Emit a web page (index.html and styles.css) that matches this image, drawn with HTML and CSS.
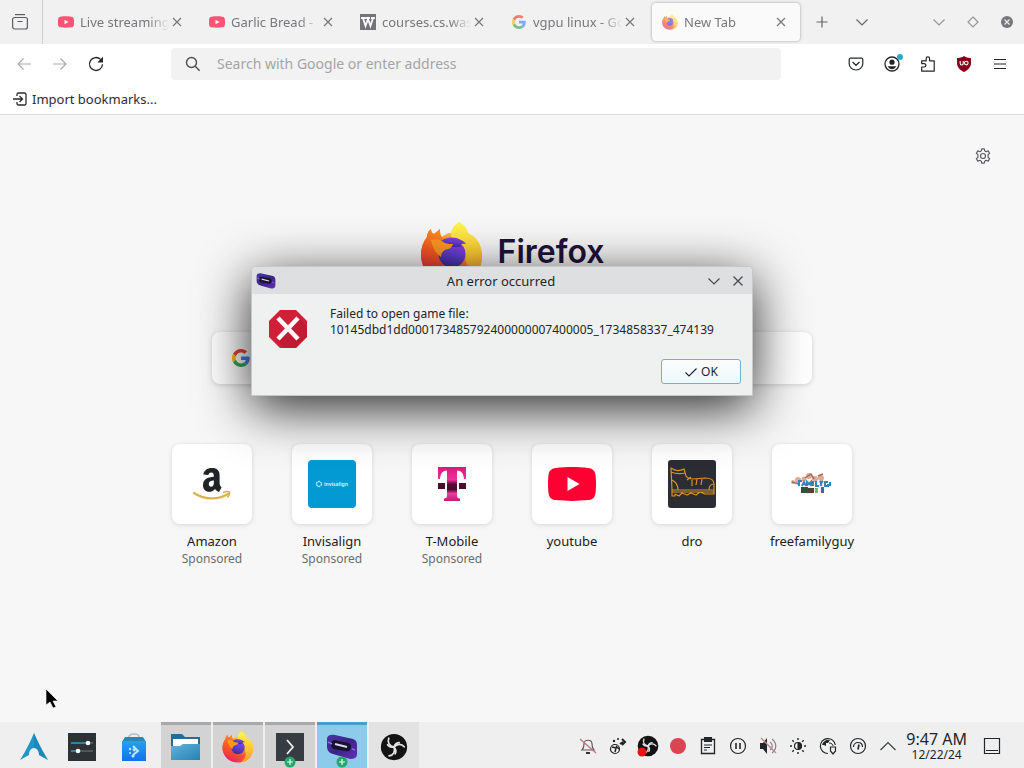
FILE: index.html
```html
<!DOCTYPE html>
<html lang="en">
<head>
<meta charset="utf-8">
<meta name="viewport" content="width=device-width, initial-scale=1">
<title>New Tab</title>
<link rel="stylesheet" href="styles.css">
</head>
<body>
<svg class="defs" aria-hidden="true">
  <defs>
    <linearGradient id="ff-body" x1=".85" y1=".1" x2=".2" y2=".95">
      <stop offset="0" stop-color="#fff13d"/><stop offset=".3" stop-color="#ffb52a"/><stop offset=".6" stop-color="#ff5a36"/><stop offset="1" stop-color="#e5177b"/>
    </linearGradient>
    <linearGradient id="ff-tail" x1=".5" y1="0" x2=".6" y2="1">
      <stop offset="0" stop-color="#fff44f"/><stop offset=".5" stop-color="#ffcf33"/><stop offset="1" stop-color="#ff9a2a"/>
    </linearGradient>
    <linearGradient id="ff-head" x1=".6" y1="0" x2=".2" y2="1">
      <stop offset="0" stop-color="#ff9a1f"/><stop offset=".5" stop-color="#fa5c20"/><stop offset="1" stop-color="#ee2a4c"/>
    </linearGradient>
    <linearGradient id="ff-globe" x1=".8" y1="0" x2=".4" y2="1">
      <stop offset="0" stop-color="#a238e8"/><stop offset=".5" stop-color="#6340d4"/><stop offset="1" stop-color="#3e2aa0"/>
    </linearGradient>
    <linearGradient id="tm" x1="0" y1="0" x2="0" y2="1">
      <stop offset="0" stop-color="#d81b7c"/><stop offset=".38" stop-color="#f0309a"/><stop offset=".5" stop-color="#5b0a35"/><stop offset=".66" stop-color="#4b0a2c"/><stop offset=".78" stop-color="#e83d9e"/><stop offset="1" stop-color="#c41c77"/>
    </linearGradient>
    <linearGradient id="folder" x1="0" y1="0" x2="1" y2="1">
      <stop offset="0" stop-color="#62b4dc"/><stop offset="1" stop-color="#2581b4"/>
    </linearGradient>
    <linearGradient id="bag" x1="0" y1="0" x2="0" y2="1">
      <stop offset="0" stop-color="#27a1ee"/><stop offset="1" stop-color="#1272e8"/>
    </linearGradient>
    <linearGradient id="handheld" x1="0" y1="0" x2="1" y2="1">
      <stop offset="0" stop-color="#4a35a8"/><stop offset=".5" stop-color="#3b2387"/><stop offset="1" stop-color="#6432b8"/>
    </linearGradient>
    <symbol id="firefox" viewBox="0 0 64 64">
      <path fill="url(#ff-body)" d="M39 1c4 3 7 6 8 11 8 4 14 11 15 22 1 17-13 29-30 29S1 51 1 34c0-7 2-13 6-18 0-3 1-6 4-8 0 3 1 4 3 5l6-5c0 4 0 6 2 8 3-2 5-4 9-4 1-5 4-8 8-11z"/>
      <path fill="url(#ff-tail)" d="M39 1c5 3 8 6 9 11 9 4 14 12 14 22 0 16-10 27-25 29 10-7 12-15 9-23-1-7-5-12-10-16-4-3-5-7-5-12 1-5 4-8 8-11z"/>
      <path fill="url(#ff-head)" d="M7 16c0-3 1-6 4-8 0 3 1 4 3 5l6-5c0 4 0 7 3 9l7 4-4 6-8 4c0 11 7 19 17 19 7 0 12-3 14-8-2 9-9 15-19 15C15 57 2 49 1 34c0-7 2-13 6-18z"/>
      <circle cx="32" cy="33" r="13.500" fill="url(#ff-globe)"/>
      <path fill="url(#ff-globe)" d="M21 20c5-4 14-5 20-1 2 1 4 2 5 4-4-1-6 0-5 3H22z"/>
      <path fill="#ff9820" d="M11 19c5-2 10 0 14 3 3 1 6 1 8 1-1 4-4 5-8 6-3 2-4 4-4 7-4-3-8-7-10-17z"/>
    </symbol>
    <symbol id="google" viewBox="0 0 48 48">
      <path fill="#ea4335" d="M24 9.500c3.500 0 6.700 1.200 9.200 3.600l6.900-6.900C35.900 2.400 30.500 0 24 0 14.600 0 6.500 5.400 2.600 13.200l8 6.200C12.400 13.700 17.700 9.500 24 9.500z"/>
      <path fill="#4285f4" d="M47 24.500c0-1.600-.2-3.100-.4-4.500H24v9h12.900c-.6 3-2.200 5.500-4.700 7.200l7.700 6C44.400 38 47 31.800 47 24.500z"/>
      <path fill="#fbbc05" d="M10.500 28.600a14 14 0 0 1 0-9.200l-8-6.200a24 24 0 0 0 0 21.600z"/>
      <path fill="#34a853" d="M24 48c6.500 0 11.900-2.100 15.900-5.800l-7.700-6A14.400 14.400 0 0 1 10.500 28.600l-8 6.200C6.500 42.600 14.600 48 24 48z"/>
    </symbol>
    <symbol id="youtube" viewBox="0 0 48 34">
      <path fill="#ff0033" d="M8 .9C18-.2 30-.2 40 .9c5 .5 7 3 7.500 7 .7 6 .7 12 0 18-.5 4-2.500 6.600-7.500 7.200-10 1.100-22 1.100-32 0-5-.6-7-3.200-7.500-7.200-.7-6-.7-12 0-18C1 3.900 3 1.400 8 .9z"/>
      <path fill="#fff" d="M19.500 10v14l12-7z"/>
    </symbol>
    <symbol id="close" viewBox="0 0 16 16"><path d="M4 4l8 8M12 4l-8 8" fill="none" stroke="currentColor" stroke-width="1.200"/></symbol>
    <symbol id="down" viewBox="0 0 16 16"><path d="M2.500 5.500L8 11l5.500-5.500" fill="none" stroke="currentColor" stroke-width="1.200"/></symbol>
    <symbol id="obs" viewBox="0 0 32 32">
      <circle cx="16" cy="16" r="15" fill="#131313"/>
      <g fill="none" stroke="#e4e4e4" stroke-width="2" stroke-linecap="round">
        <path id="blade" d="M16 16c-5-1-8-5-6-10M16 16c1-3 3-5 6-5"/>
        <use href="#blade" transform="rotate(120 16 16)"/><use href="#blade" transform="rotate(240 16 16)"/>
      </g>
    </symbol>
    <symbol id="console" viewBox="0 0 32 26">
      <path fill="url(#handheld)" d="M1 4c1-3 4-4 8-3l18 4c3 1 4 3 4 6v9c0 4-3 5-7 5L7 20c-4-1-6-4-6-7z"/>
      <path fill="#15122b" d="M8 6l14 3c3 1 3 2 3 4-1 3-2 5-5 4L8 15c-4-1-4-8 0-9z"/>
      <path d="M9 10l12 3" stroke="#ddd5ef" stroke-width="2"/>
      <path d="M2 8l4 2M26 15l3 1" stroke="#8b68df" stroke-width="1.500"/>
    </symbol>
    <symbol id="plus-badge" viewBox="0 0 12 12"><circle cx="6" cy="6" r="5.500" fill="#29a56c"/><path d="M6 3v6M3 6h6" stroke="#e3fff0" stroke-width="1.200"/></symbol>
  </defs>
</svg>

<header>
  <div class="tabstrip">
    <button class="view" aria-label="Firefox View">
      <svg class="i18" viewBox="0 0 18 18" fill="none" stroke="#5b5b66" stroke-width="1.200"><path d="M4 1.600h10"/><path d="M1.600 6.500a2 2 0 0 1 2-2h10.800a2 2 0 0 1 2 2v7.500a2 2 0 0 1-2 2H3.600a2 2 0 0 1-2-2zM6.500 8.500h5"/></svg>
    </button>
    <nav class="tabs" aria-label="Tabs">
      <div class="tab"><svg class="fav"><use href="#youtube"/></svg><a href="#" class="label">Live streaming</a><button aria-label="Close tab"><svg class="i16"><use href="#close"/></svg></button></div>
      <div class="tab"><svg class="fav"><use href="#youtube"/></svg><a href="#" class="label">Garlic Bread -</a><button aria-label="Close tab"><svg class="i16"><use href="#close"/></svg></button></div>
      <div class="tab"><svg class="fav" viewBox="0 0 16 16"><path fill="#32303f" d="M0 0h16v16H0z"/><path d="M1 4h5M6 4h4M11 4h4M3 4l2.500 8L8 5l2.500 7L13 4" fill="none" stroke="#fff" stroke-width="1.800"/></svg><a href="#" class="label">courses.cs.was</a><button aria-label="Close tab"><svg class="i16"><use href="#close"/></svg></button></div>
      <div class="tab"><svg class="fav small"><use href="#google"/></svg><a href="#" class="label">vgpu linux - Go</a><button aria-label="Close tab"><svg class="i16"><use href="#close"/></svg></button></div>
      <div class="tab active"><svg class="fav"><use href="#firefox"/></svg><a href="#" class="label">New Tab</a><button aria-label="Close tab"><svg class="i16"><use href="#close"/></svg></button></div>
    </nav>
    <div class="tabtools">
      <button aria-label="Open a new tab"><svg class="i16" viewBox="0 0 16 16"><path d="M8 2.500v11M2.500 8h11" stroke="currentColor" stroke-width="1.200"/></svg></button>
      <button aria-label="List all tabs"><svg class="i16"><use href="#down"/></svg></button>
    </div>
    <div class="wm">
      <button aria-label="Minimize"><svg class="i16"><use href="#down"/></svg></button>
      <button aria-label="Restore"><svg class="i16" viewBox="0 0 16 16"><path d="M8 3l5 5-5 5-5-5z" fill="none" stroke="currentColor" stroke-width="1.200"/></svg></button>
      <button aria-label="Close"><svg class="i16" viewBox="0 0 16 16"><circle cx="8" cy="8" r="6" fill="#77777b"/><path d="M5.500 5.500l5 5M10.500 5.500l-5 5" stroke="#ececec" stroke-width="1.200"/></svg></button>
    </div>
  </div>

  <div class="toolbar">
    <div class="history">
      <button class="dim" aria-label="Back"><svg class="i16" viewBox="0 0 16 16" fill="none" stroke="currentColor" stroke-width="1.200"><path d="M15 8H2M7.500 2.500L2 8l5.500 5.500"/></svg></button>
      <button class="dim" aria-label="Forward"><svg class="i16" viewBox="0 0 16 16" fill="none" stroke="currentColor" stroke-width="1.200"><path d="M1 8h13M8.500 2.500L14 8l-5.500 5.500"/></svg></button>
      <button aria-label="Reload"><svg class="i16" viewBox="0 0 16 16"><path d="M14.500 8.200A6.500 6.500 0 1 1 12.600 3.400" fill="none" stroke="currentColor" stroke-width="1.300"/><path d="M15 .8v5.700H9.300z" fill="currentColor"/></svg></button>
    </div>
    <label class="urlbar">
      <svg class="i16" viewBox="0 0 16 16" fill="none" stroke="#4c4c55" stroke-width="1.400"><circle cx="6.500" cy="6.500" r="5"/><path d="M10.200 10.200l4.500 4.500"/></svg>
      <input type="text" placeholder="Search with Google or enter address" aria-label="Address">
    </label>
    <div class="actions">
      <button aria-label="Save to Pocket"><svg class="i16" viewBox="0 0 16 16" fill="none" stroke="currentColor" stroke-width="1.200" stroke-linejoin="round" stroke-linecap="round"><path d="M2.500 2.200h11a1.300 1.300 0 0 1 1.300 1.300v4.200a6.800 6.300 0 0 1-13.600 0V3.500a1.300 1.300 0 0 1 1.300-1.300z"/><path d="M4.800 6.300L8 9.300l3.200-3"/></svg></button>
      <button class="account" aria-label="Account"><svg class="i16" viewBox="0 0 16 16"><circle cx="8" cy="8" r="7" fill="none" stroke="currentColor" stroke-width="1.300"/><circle cx="8" cy="6.200" r="2.600" fill="currentColor"/><path d="M3.800 10.200h8.400c-.8 2-2.300 3-4.200 3s-3.400-1-4.200-3z" fill="currentColor"/></svg><span class="dot"></span></button>
      <button aria-label="Extensions"><svg class="i16" viewBox="0 0 16 16" fill="none" stroke="currentColor" stroke-width="1.200" stroke-linejoin="round"><path d="M1.700 15.200V11h2.500a1.700 1.700 0 0 0 0-3.400H1.700V4.800h4.500V2.600a1.700 1.700 0 0 1 3.400 0v2.200h4.600v10.400z"/></svg></button>
      <button aria-label="uBlock Origin"><svg class="i16" viewBox="0 0 16 16"><path d="M8 0c2 1.400 4.400 2 7 2v5c0 4-2.500 7-7 9-4.500-2-7-5-7-9V2c2.600 0 5-.6 7-2z" fill="#86001a"/><path d="M4.200 5v2.500a1.500 1.500 0 0 0 3 0V5" fill="none" stroke="#fff" stroke-width="1.100"/><circle cx="10.300" cy="7.100" r="1.800" fill="none" stroke="#fff" stroke-width="1.100"/></svg></button>
      <button aria-label="Menu"><svg class="i16" viewBox="0 0 16 16"><path d="M2 3.500h12M2 8h12M2 12.500h12" stroke="currentColor" stroke-width="1.200"/></svg></button>
    </div>
  </div>

  <div class="bookmarks">
    <button><svg class="i16" viewBox="0 0 16 16" fill="none" stroke="currentColor" stroke-width="1.300"><path d="M5 5V3.500A1.500 1.500 0 0 1 6.500 2h6A1.500 1.500 0 0 1 14 3.500v9a1.500 1.500 0 0 1-1.500 1.500h-6A1.500 1.500 0 0 1 5 12.500V11M1 8h9.500M7.500 5l3 3-3 3"/></svg>Import bookmarks...</button>
  </div>
</header>

<main>
  <button class="gear" aria-label="Personalize new tab"><svg class="i16" viewBox="0 0 16 16" fill="none" stroke="currentColor" stroke-width="1.200" stroke-linejoin="round"><path d="M6.700.8h2.600l.4 2 1.500.9 2-.8 1.400 2.300-1.500 1.400v2.800l1.500 1.400-1.400 2.300-2-.8-1.500.9-.4 2H6.700l-.4-2-1.500-.9-2 .8-1.400-2.300 1.500-1.400V6.600L1.400 5.200l1.400-2.300 2 .8 1.500-.9z"/><circle cx="8" cy="8" r="2.500"/></svg></button>
  <div class="brand"><svg class="brand-mark"><use href="#firefox"/></svg><span>Firefox</span></div>
  <label class="search"><svg class="i18"><use href="#google"/></svg><input type="search" aria-label="Search the web"></label>
  <div class="sites">
    <a href="#" class="site"><span class="tile"><svg viewBox="0 0 48 48"><path d="M24.500 23.500c-3.200.3-4.700 1.300-4.700 3.600 0 1.700.9 2.700 2.300 2.700 1.800 0 2.800-1.600 2.800-4.200v-2.200zm5.500 11.400c-1.800-.8-3-1.700-3.900-3-1.900 2-3.600 2.900-6 2.900-3.700 0-6.100-2.500-6.100-6.500 0-5.600 4.100-8.200 10.800-8.500v-1c0-2.200-.7-3.400-2.600-3.400-1.600 0-2.500.9-2.900 2.700l-5-.7C15.100 13.600 18 11 22.900 11c5.400 0 7.700 2.600 7.700 7.600v7c0 2.300.3 3.400 2 4.900z" transform="translate(1 -3)" fill="#222328"/><path d="M6 33c10 7 24 7 34 1" fill="none" stroke="#dfb34c" stroke-width="2.200" stroke-linecap="round"/><path d="M35 32.500c3-1 6-1 6.500-.3s-.5 3.500-2 5.300" fill="none" stroke="#dfb34c" stroke-width="1.600"/></svg></span><span class="name">Amazon</span><span class="sponsor">Sponsored</span></a>
    <a href="#" class="site"><span class="tile"><svg viewBox="0 0 48 48"><rect width="48" height="48" rx="4" fill="#0399d2"/><circle cx="11" cy="24" r="2.500" fill="none" stroke="#bfe8f6" stroke-width="1.300" stroke-dasharray="2 .6"/><text x="16" y="26" class="tinylogo">invisalign</text></svg></span><span class="name">Invisalign</span><span class="sponsor">Sponsored</span></a>
    <a href="#" class="site"><span class="tile"><svg viewBox="0 0 48 48"><path fill="url(#tm)" d="M10 7h28v12h-2c-.5-5-2-8-7-8.500V34c0 4 1 4.500 3 4.500V41H16v-2.500c2 0 3-.5 3-4.500V10.500c-5 .5-6.500 3.500-7 8.500h-2z"/><path fill="#4d0b30" d="M10 23h7v6h-7zM31 23h7v6h-7z"/></svg></span><span class="name">T-Mobile</span><span class="sponsor">Sponsored</span></a>
    <a href="#" class="site"><span class="tile"><svg><use href="#youtube"/></svg></span><span class="name">youtube</span></a>
    <a href="#" class="site"><span class="tile"><svg viewBox="0 0 48 48"><rect width="48" height="48" rx="3" fill="#2c2c33"/><g fill="none" stroke="#d69425" stroke-width="1.200" stroke-linejoin="round"><path d="M3 8c4 3 9 3 13 1l2 7c2 3 4 3 7 3l12-1c6 0 9 2 9 6v6H4zM3 12c5 2 9 2 14 1M4 20c4 2 6 6 6 10M4 30v6h3v-2l4 2 3-3 5 2 4-2 5 2 4-3 5 2h9v-4M4 32h42M19 20l4-3M24 20v6M29 19l-1 6M34 19l-1 6M41 30c0-4 2-6 5-6"/></g></svg></span><span class="name">dro</span></a>
    <a href="#" class="site"><span class="tile"><svg viewBox="0 0 48 48"><g fill="#e0ab94"><circle cx="5" cy="22" r="2"/><circle cx="10" cy="20" r="3"/><circle cx="16" cy="19" r="2.500"/><circle cx="21" cy="16" r="3"/><circle cx="27" cy="19" r="3"/><circle cx="33" cy="18" r="3"/></g><path d="M4 22l7 2M17 18l6-4 3 5M30 16l5-2" stroke="#a5695a" stroke-width="1.500" fill="none"/><path fill="#f4eef0" d="M18 20h6v14h-6zM31 21h5v12h-5z"/><path fill="#31533e" d="M13 27h7v6h-7z"/><path fill="#514338" d="M20 28h6v5h-6z"/><path fill="#78b36c" d="M27 28h3v5h-3z"/><path fill="#3e68a0" d="M33 27h3v6h-3z"/><path d="M10 21h4M11 20v6M14 26l2-4 2 4M19 26v-4l2 2 2-2v4M25 21v5M28 21v5h3M32 21l1 2v3M35 21l-2 2M40 22h-3v4h3v-2M42 22v4" stroke="#3188b8" stroke-width="2" fill="none"/></svg></span><span class="name">freefamilyguy</span></a>
  </div>
</main>

<footer class="panel">
  <div class="launchers">
    <button aria-label="Applications"><svg class="i28" viewBox="0 0 28 28"><path fill="#2196c9" d="M14 0c3 7 8 17 14 27l-9-5c0-4-2-7-5-7s-5 3-5 7l-9 5C6 18 11 7 14 0z"/><path fill="#1574a0" d="M14 0c3 7 8 17 14 27l-9-5c0-4-2-7-5-7z" opacity=".35"/></svg></button>
    <button aria-label="System Settings"><svg class="i28" viewBox="0 0 28 28"><path fill="#2d3237" d="M0 0h28v28H0z"/><path d="M3 10h17M3 18h7" stroke="#3c9ac5" stroke-width="1.500"/><path d="M20 10h5M10 18h15" stroke="#596168" stroke-width="1.500"/><circle cx="20" cy="10" r="2.300" fill="#fff"/><circle cx="10" cy="18" r="2.300" fill="#fff"/></svg></button>
    <button aria-label="Discover"><svg class="i28" viewBox="0 0 28 28"><path d="M9 7V4c0-4 10-4 10 0v3" fill="none" stroke="#b4c1c9" stroke-width="1.500"/><path fill="#2589bc" d="M5 4h18l3 5H2z"/><path fill="url(#bag)" d="M2 8h24v20H2z"/><g fill="#bfe8ff"><circle cx="10" cy="16" r="1.200"/><circle cx="13" cy="23" r="1.500"/><circle cx="10" cy="20" r="1"/></g><path d="M13 13l5 5-5 4M13 16l2 2" fill="none" stroke="#bfe8ff" stroke-width="2"/></svg></button>
    <button class="task" aria-label="Files"><svg class="i28 wide" viewBox="0 0 30 28"><path fill="#256c98" d="M0 1h11l3 3h15v20H0z"/><path fill="#fff" d="M2 6h25v10H2z"/><path fill="url(#folder)" d="M0 13h9l3-2h17v16H0z"/></svg></button>
    <button class="task" aria-label="Firefox"><svg class="i32"><use href="#firefox"/></svg></button>
    <button class="task" aria-label="Terminal"><svg class="i28" viewBox="0 0 28 28"><path fill="#363c42" d="M0 0h28v28H0z"/><path d="M11 7l6 7-6 7" fill="none" stroke="#f0f0f0" stroke-width="1.800"/></svg><svg class="plus"><use href="#plus-badge"/></svg></button>
    <button class="task current" aria-label="Game"><svg class="i32"><use href="#console"/></svg><svg class="plus"><use href="#plus-badge"/></svg></button>
    <button class="task idle" aria-label="OBS Studio"><svg class="i28"><use href="#obs"/></svg></button>
  </div>
  <div class="tray">
    <button aria-label="Notifications off"><svg class="i18" viewBox="0 0 18 18"><path d="M3 13c2-2 2-3 2-6 0-5 8-5 8 0 0 3 0 4 2 6z" fill="none" stroke="#60585d" stroke-width="1.200"/><path d="M7 15h4v2H7z" fill="#333"/><path d="M1 2l16 14" stroke="#bd7480" stroke-width="1.300"/></svg></button>
    <button aria-label="Network"><svg class="i18" viewBox="0 0 18 18"><circle cx="6" cy="12" r="4.500" fill="none" stroke="#222" stroke-width="1.200"/><path d="M3 10l4 1-1 4M7 9l3 3" stroke="#222" fill="none" stroke-width="1.500"/><path d="M13 2l3 3-3 3M11 7l3-2" fill="none" stroke="#222" stroke-width="2"/><circle cx="5" cy="4" r="1.200" fill="#222"/><circle cx="9" cy="2" r="1" fill="#222"/></svg></button>
    <button aria-label="OBS recording"><svg class="i22" viewBox="0 0 22 22"><use href="#obs" width="22" height="22"/><circle cx="5" cy="17" r="4.500" fill="#f01212"/></svg></button>
    <button aria-label="Record"><svg class="i18" viewBox="0 0 18 18"><circle cx="9" cy="9" r="8" fill="#da4453"/></svg></button>
    <button aria-label="Clipboard"><svg class="i18" viewBox="0 0 18 18"><path d="M2.500 2.500h13v14h-13z" fill="none" stroke="#232629" stroke-width="1.300"/><path d="M5 0h8v5H5z" fill="#232629"/><path d="M5 8h8M5 10.500h6M5 13h3" stroke="#232629" stroke-width="1.200"/></svg></button>
    <button aria-label="Media paused"><svg class="i18" viewBox="0 0 18 18" fill="none" stroke="#232629"><circle cx="9" cy="9" r="7.500" stroke-width="1.200"/><path d="M7 6v6M11 6v6" stroke-width="1.600"/></svg></button>
    <button aria-label="Volume muted"><svg class="i18" viewBox="0 0 18 18"><path fill="#232629" d="M1 6h3l4-5v16l-4-5H1z"/><path d="M11 5c3 2 3 6 0 8M13 2c5 4 5 10 0 14" stroke="#8b8083" fill="none" stroke-width="1.200"/><path d="M2 1l15 15" stroke="#bd8991" stroke-width="1.300"/></svg></button>
    <button aria-label="Brightness"><svg class="i18" viewBox="0 0 18 18" fill="none" stroke="#232629"><circle cx="9" cy="9" r="3.500" stroke-width="1.200"/><path d="M9 5.500a3.500 3.500 0 0 1 0 7z" fill="#232629"/><path d="M9 1v2M9 15v2M1 9h2M15 9h2M3.300 3.300l1.500 1.500M13.200 13.200l1.500 1.500M3.300 14.700l1.500-1.500M13.200 4.800l1.500-1.500" stroke-width="1.400"/></svg></button>
    <button aria-label="VPN"><svg class="i18" viewBox="0 0 18 18"><path d="M9 16.500A7.500 7.500 0 1 1 16.300 8" fill="none" stroke="#232629" stroke-width="1.200"/><path d="M3 8c1-4 5-6 8-5L9 6 7 6v3L5 8z" fill="#232629"/><path d="M10 6c3 0 4 2 4 3" stroke="#232629" fill="none"/><path d="M11.500 10h5v4l-2.500 3-2.500-3z" fill="none" stroke="#232629" stroke-width="1.200"/></svg></button>
    <button aria-label="Power profile"><svg class="i18" viewBox="0 0 18 18" fill="none" stroke="#232629" stroke-width="1.200"><circle cx="9" cy="9" r="7.500"/><path d="M4.500 10c0-6 9-6 9 0"/><path d="M10 7.500l-1 5" stroke-width="1.600"/></svg></button>
    <button aria-label="Show hidden icons"><svg class="i18" viewBox="0 0 18 18"><path d="M1.500 13L9 5.500l7.500 7.500" fill="none" stroke="#3c3f42" stroke-width="1.200"/></svg></button>
    <div class="clock"><time class="time">9:47 AM</time><time class="date">12/22/24</time></div>
    <button aria-label="Show desktop"><svg class="i18" viewBox="0 0 18 18"><path d="M1.500 1.500h15v15h-15zM3 13.500h12" fill="none" stroke="#232629" stroke-width="1.200"/></svg></button>
  </div>
</footer>

<section class="dialog" role="alertdialog" aria-labelledby="dlg-title" aria-describedby="dlg-text">
  <div class="dialog-title">
    <svg class="i20"><use href="#console"/></svg>
    <h1 id="dlg-title">An error occurred</h1>
    <div class="dialog-controls">
      <button aria-label="Minimize"><svg class="i16"><use href="#down"/></svg></button>
      <button aria-label="Close"><svg class="i16" viewBox="0 0 16 16"><path d="M3.500 3.500l9 9M12.500 3.500l-9 9" stroke="currentColor" stroke-width="1.300"/></svg></button>
    </div>
  </div>
  <div class="dialog-body">
    <svg class="error" viewBox="0 0 38 38"><path fill="#cf2038" d="M11 0h16l11 11v16L27 38H11L0 27V11z"/><path fill="#a9152c" d="M30 8l8 8v11L27 38H15l-6-8z" opacity=".4"/><path d="M9 8l20 21M29 8L9 29" stroke="#fff8f8" stroke-width="4.500"/></svg>
    <p id="dlg-text">Failed to open game file:<br>10145dbd1dd000173485792400000007400005_1734858337_474139</p>
  </div>
  <div class="dialog-foot">
    <button class="ok"><svg class="i14" viewBox="0 0 14 14"><path d="M1.500 7.500l3.500 3.500 7.500-7.500" fill="none" stroke="currentColor" stroke-width="1.200"/></svg>OK</button>
  </div>
</section>

<svg class="pointer" viewBox="0 0 14 22" aria-hidden="true"><path d="M1 1v16l4-3 3 6 3-1-3-6h5z" fill="#000" stroke="#fff" stroke-width=".6"/></svg>
</body>
</html>
```

FILE: styles.css
```css
* { box-sizing: border-box; }

body {
  margin: 0;
  min-height: 100vh;
  display: flex;
  flex-direction: column;
  position: relative;
  overflow: hidden;
  background: #f7f7f7;
  color: #232629;
  font: 13px/18px "Noto Sans", sans-serif;
}

button {
  display: flex;
  align-items: center;
  justify-content: center;
  padding: 0;
  border: 0;
  background: none;
  color: inherit;
  font: inherit;
}

a { color: inherit; text-decoration: none; }
svg { flex: none; display: block; }
input { border: 0; outline: 0; background: none; font: inherit; min-width: 0; flex: 1; padding: 0; }

.defs { position: absolute; width: 0; height: 0; }
.i14 { width: 14px; height: 14px; }
.i16 { width: 16px; height: 16px; }
.i18 { width: 18px; height: 18px; }
.i20 { width: 20px; height: 20px; }
.i22 { width: 22px; height: 22px; }
.i28 { width: 28px; height: 28px; }
.i28.wide { width: 30px; }
.i32 { width: 32px; height: 32px; }

/* Tab strip */
.tabstrip { display: flex; height: 44px; background: #f1f1f1; color: #77777c; }
.view { width: 43px; padding-right: 3px; border-right: 1px solid #cfcfcf; }
.tabs { display: flex; padding: 3px 0 3px 5px; gap: 3px; }
.tab { width: 148px; display: flex; align-items: center; padding: 0 9px 0 10px; border-radius: 4px; }
.tab.active { background: #fafafa; box-shadow: 0 0 3px rgba(0, 0, 0, .35); }
.tab button { margin-left: -2px; margin-right: 2px; }
.fav { width: 16px; height: 16px; margin-right: 6px; opacity: .65; }
.fav.small { width: 14px; height: 14px; margin: 0 7px 0 1px; }
.tab .label {
  flex: 1;
  white-space: nowrap;
  overflow: hidden;
  mask-image: linear-gradient(to right, #000 75%, transparent 98%);
}
.tabtools { display: flex; gap: 24px; padding-left: 14px; color: #65656a; }
.wm { display: flex; gap: 18px; margin-left: auto; padding-right: 9px; color: #96969b; }

/* Navigation */
.toolbar { display: flex; align-items: center; height: 40px; background: #fff; padding: 0 16px; }
.history { display: flex; gap: 20px; width: 155px; }
.history .dim { color: #ababb0; }
.urlbar {
  flex: 1;
  display: flex;
  align-items: center;
  gap: 16px;
  height: 32px;
  padding: 0 14px;
  border-radius: 4px;
  background: #f2f2f2;
  font-size: 14px;
}
.urlbar input::placeholder { color: #a4a4a6; opacity: 1; }
.actions { display: flex; justify-content: space-between; width: 227px; padding-left: 67px; }
.account { position: relative; }
.dot { position: absolute; top: -2px; right: -3px; width: 6px; height: 6px; border-radius: 50%; background: #26aace; }
.bookmarks { display: flex; height: 31px; padding: 0 12px; background: #fff; border-bottom: 1px solid #dcdcdc; }
.bookmarks button { gap: 4px; color: #2b2b30; }

/* New tab page */
main { flex: 1; display: flex; flex-direction: column; align-items: center; position: relative; padding: 106px 16px 0; }
.gear { position: absolute; top: 33px; right: 33px; color: #5b5b66; }
.brand { display: flex; gap: 14px; height: 64px; color: #20123a; font: 600 32px/62px Inter, "Noto Sans", sans-serif; }
.brand-mark { width: 64px; height: 64px; }
.search {
  display: flex;
  align-items: center;
  width: min(600px, 100%);
  height: 52px;
  margin: 47px 0 60px;
  padding: 0 20px;
  border-radius: 8px;
  background: #fff;
  box-shadow: 0 1px 5px rgba(0, 0, 0, .16);
}
.sites { display: flex; flex-wrap: wrap; justify-content: center; }
.site { width: 120px; display: flex; flex-direction: column; align-items: center; color: #1c1b22; }
.tile {
  display: grid;
  place-items: center;
  width: 80px;
  height: 80px;
  margin-bottom: 8px;
  border-radius: 8px;
  background: #fff;
  box-shadow: 0 1px 5px rgba(0, 0, 0, .14);
}
.tile svg { width: 48px; height: 48px; }
.sponsor { color: #6c6c72; font-size: 12px; }
.tinylogo { fill: #c9ecf7; font: 700 5px "Noto Sans", sans-serif; }

/* Desktop panel */
.panel { display: flex; justify-content: space-between; height: 46px; padding-left: 9px; background: #efefef; }
.launchers { display: flex; gap: 2px; }
.launchers button { position: relative; width: 50px; padding-top: 3px; }
.launchers button:first-child { margin-right: -4px; }
.launchers .task { background: #d3d3d3; border-top: 3px solid #a6a8aa; padding: 0; }
.launchers .task.current { background: #8dcbea; border-top-color: #4d9cc4; }
.launchers .task.idle { background: #e3e3e3; border-top-color: #e3e3e3; }
.plus { position: absolute; bottom: 0; left: 19px; width: 12px; height: 12px; }
.tray { display: flex; align-items: center; padding: 2px 17px 0 0; }
.tray button { width: 30px; }
.clock { display: flex; flex-direction: column; align-items: center; margin: 0 10px 0 3px; }
.time { font-size: 16px; line-height: 17px; }
.date { font-size: 12px; line-height: 14px; }

/* Error dialog */
.dialog {
  position: absolute;
  left: 251px;
  top: 266px;
  width: 502px;
  border: 1px solid #c8c8c9;
  border-radius: 5px 5px 1px 1px;
  background: #eff0f0;
  box-shadow: 0 12px 52px rgba(0, 0, 0, .85);
  font-size: 12px;
}
.dialog-title { display: grid; grid-template-columns: 60px 1fr 60px; align-items: center; height: 27px; padding: 0 6px 0 4px; background: #dedfe0; border-radius: 4px 4px 0 0; }
.dialog-title h1 { margin: 0; font: 13px/18px "Noto Sans", sans-serif; text-align: center; }
.dialog-controls { display: flex; justify-content: flex-end; gap: 8px; color: #484b4e; }
.dialog-body { display: flex; gap: 23px; padding: 12px 16px 0 17px; }
.dialog-body p { margin: 0; line-height: 16px; }
.error { width: 38px; height: 38px; margin-top: 4px; }
.dialog-foot { display: flex; justify-content: flex-end; padding: 11px 11px 11px; }
.ok { width: 80px; height: 25px; gap: 3px; border: 1px solid #6cb3cc; border-radius: 3px; background: linear-gradient(#fbfdfd, #eef9fc); }

.pointer { position: absolute; left: 45px; top: 688px; width: 14px; height: 22px; }
```
